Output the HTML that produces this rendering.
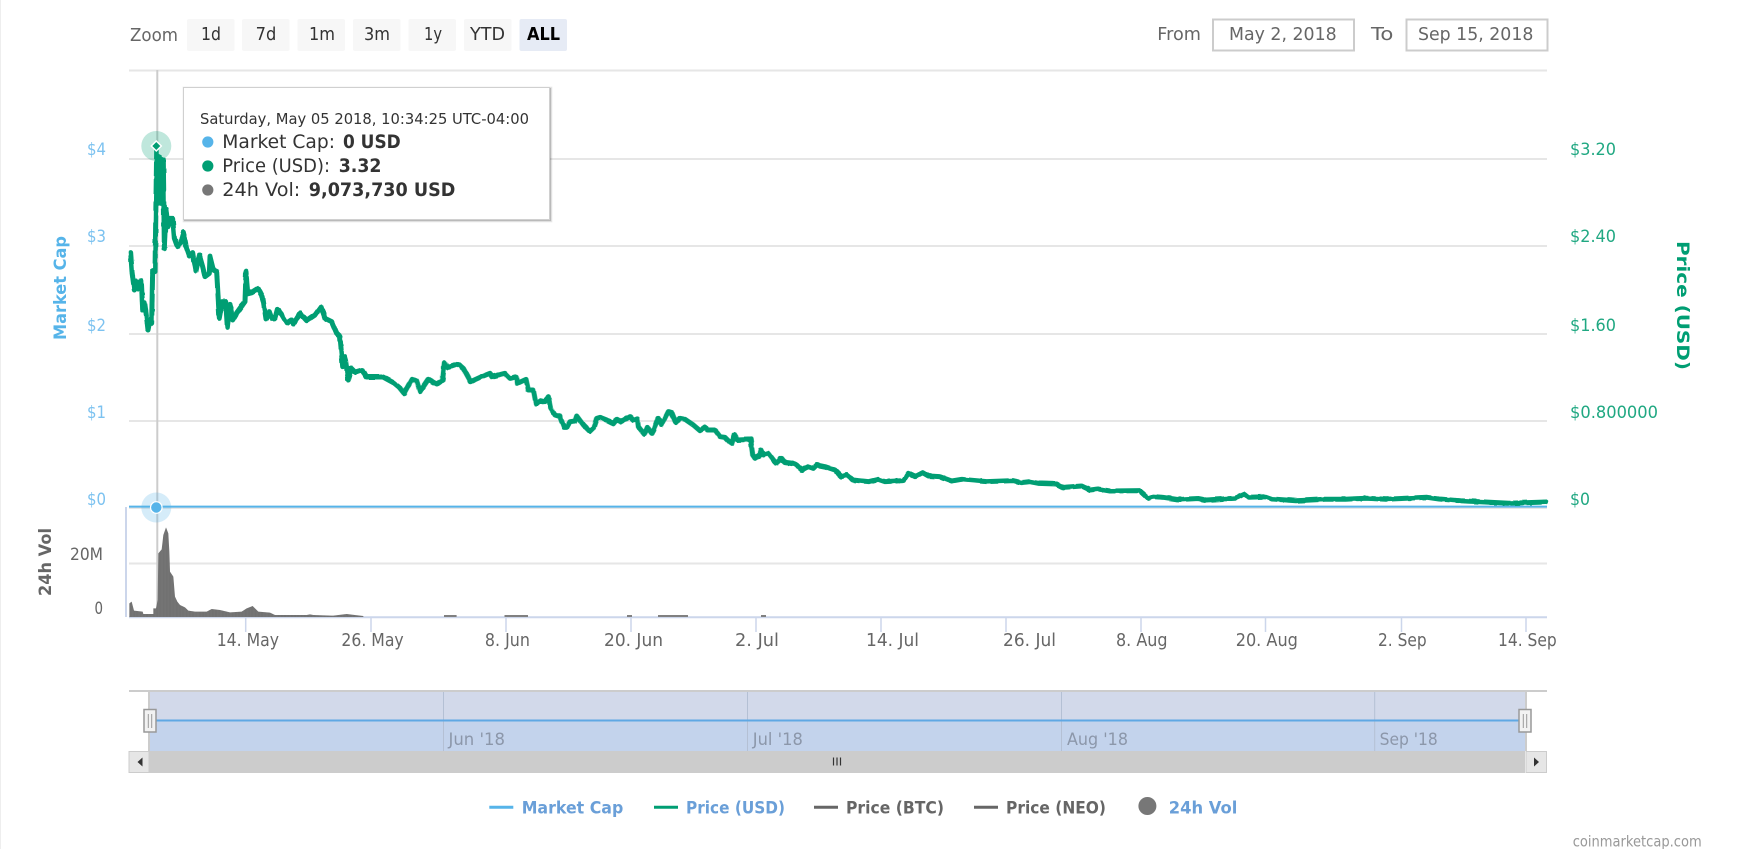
<!DOCTYPE html>
<html><head><meta charset="utf-8"><title>Chart</title>
<style>
html,body{margin:0;padding:0;background:#fff;width:1741px;height:849px;overflow:hidden}
svg{display:block;position:absolute;left:0;top:0}
text{font-family:"DejaVu Sans","Liberation Sans",sans-serif;white-space:pre}
.t{font-size:18px;fill:#666}
.b{font-size:18px;fill:#333}
.bl{font-size:16.5px;fill:#7cc2f0}
.gr{font-size:16.5px;fill:#20a882}
.x{font-size:18px;fill:#666}
.n{font-size:16.5px;fill:#8c97aa}
.l{font-size:17px;font-weight:bold}
.tt{font-size:19px;fill:#333}
.ttb{font-size:19px;fill:#333;font-weight:bold}
</style></head><body>
<svg width="1741" height="849" viewBox="0 0 1741 849" xmlns="http://www.w3.org/2000/svg">
<defs>
<pattern id="v" width="2.3" height="10" patternUnits="userSpaceOnUse"><rect width="2.3" height="10" fill="#808080"/><rect width="1.7" height="10" fill="#6e6e6e"/></pattern>
<filter id="rough" filterUnits="userSpaceOnUse" x="100" y="120" width="1470" height="410" color-interpolation-filters="sRGB">
<feTurbulence type="fractalNoise" baseFrequency=".14" numOctaves="1" seed="4" result="n"/>
<feDisplacementMap in="SourceGraphic" in2="n" scale="2.2" xChannelSelector="R" yChannelSelector="G"/>
</filter>
</defs>
<rect width="1741" height="849" fill="#fff"/>
<rect x="0" y="0" width="1" height="849" fill="#eee"/>

<!-- range selector -->
<text class="t" x="130" y="41" textLength="48" lengthAdjust="spacingAndGlyphs">Zoom</text>
<g fill="#f7f7f7">
<rect x="187" y="19" width="47.5" height="32" rx="2"/><rect x="242" y="19" width="47.5" height="32" rx="2"/><rect x="297.5" y="19" width="47.5" height="32" rx="2"/><rect x="353" y="19" width="47.5" height="32" rx="2"/><rect x="408.5" y="19" width="47.5" height="32" rx="2"/><rect x="464" y="19" width="47.5" height="32" rx="2"/>
<rect x="519.5" y="19" width="47.5" height="32" rx="2" fill="#e6ebf5"/>
</g>
<text class="b" x="201" y="40" textLength="20" lengthAdjust="spacingAndGlyphs">1d</text>
<text class="b" x="255.6" y="40" textLength="20.7" lengthAdjust="spacingAndGlyphs">7d</text>
<text class="b" x="309" y="40" textLength="26" lengthAdjust="spacingAndGlyphs">1m</text>
<text class="b" x="364" y="40" textLength="26" lengthAdjust="spacingAndGlyphs">3m</text>
<text class="b" x="424" y="40" textLength="18" lengthAdjust="spacingAndGlyphs">1y</text>
<text class="b" x="470" y="40" textLength="35" lengthAdjust="spacingAndGlyphs">YTD</text>
<text x="527" y="40" font-size="18" font-weight="bold" fill="#000" textLength="33" lengthAdjust="spacingAndGlyphs">ALL</text>

<text class="t" x="1157.3" y="40" textLength="43.7" lengthAdjust="spacingAndGlyphs">From</text>
<rect x="1213" y="19.5" width="141" height="31" fill="#fff" stroke="#ccc" stroke-width="2"/>
<text class="t" x="1229" y="40" textLength="107.7" lengthAdjust="spacingAndGlyphs">May 2, 2018</text>
<text class="t" x="1371" y="40" textLength="22.3" lengthAdjust="spacingAndGlyphs">To</text>
<rect x="1406.5" y="19.5" width="141" height="31" fill="#fff" stroke="#ccc" stroke-width="2"/>
<text class="t" x="1418" y="40" textLength="115.4" lengthAdjust="spacingAndGlyphs">Sep 15, 2018</text>

<!-- grid -->
<g stroke="#e6e6e6" stroke-width="2">
<line x1="129" x2="1547" y1="70.5" y2="70.5"/><line x1="129" x2="1547" y1="159" y2="159"/><line x1="129" x2="1547" y1="246" y2="246"/><line x1="129" x2="1547" y1="334" y2="334"/><line x1="129" x2="1547" y1="421" y2="421"/><line x1="129" x2="1547" y1="508" y2="508"/><line x1="129" x2="1547" y1="563.5" y2="563.5"/>
</g>
<!-- axes -->
<line x1="126" x2="126" y1="507" y2="617" stroke="#ccd6eb" stroke-width="2"/>
<line x1="129" x2="1547" y1="617.3" y2="617.3" stroke="#ccd6eb" stroke-width="2"/>
<g stroke="#ccd6eb" stroke-width="1.5">
<line x1="245.7" x2="245.7" y1="617" y2="632"/><line x1="371" x2="371" y1="617" y2="632"/><line x1="506" x2="506" y1="617" y2="632"/><line x1="631" x2="631" y1="617" y2="632"/><line x1="756" x2="756" y1="617" y2="632"/><line x1="881" x2="881" y1="617" y2="632"/><line x1="1006" x2="1006" y1="617" y2="632"/><line x1="1141" x2="1141" y1="617" y2="632"/><line x1="1265.5" x2="1265.5" y1="617" y2="632"/><line x1="1401.5" x2="1401.5" y1="617" y2="632"/><line x1="1526" x2="1526" y1="617" y2="632"/>
</g>

<!-- y labels -->
<text class="bl" x="87" y="155" textLength="19" lengthAdjust="spacingAndGlyphs">$4</text>
<text class="bl" x="87" y="242" textLength="19" lengthAdjust="spacingAndGlyphs">$3</text>
<text class="bl" x="87" y="331" textLength="19" lengthAdjust="spacingAndGlyphs">$2</text>
<text class="bl" x="87" y="418" textLength="19" lengthAdjust="spacingAndGlyphs">$1</text>
<text class="bl" x="87" y="505" textLength="19" lengthAdjust="spacingAndGlyphs">$0</text>
<text class="gr" x="1570" y="155" textLength="46" lengthAdjust="spacingAndGlyphs">$3.20</text>
<text class="gr" x="1570" y="242" textLength="46" lengthAdjust="spacingAndGlyphs">$2.40</text>
<text class="gr" x="1570" y="331" textLength="46" lengthAdjust="spacingAndGlyphs">$1.60</text>
<text class="gr" x="1570" y="418" textLength="88" lengthAdjust="spacingAndGlyphs">$0.800000</text>
<text class="gr" x="1570" y="505" textLength="20" lengthAdjust="spacingAndGlyphs">$0</text>
<text x="70" y="560" font-size="17" fill="#666" textLength="33" lengthAdjust="spacingAndGlyphs">20M</text>
<text x="94.5" y="614" font-size="17" fill="#666" textLength="8.5" lengthAdjust="spacingAndGlyphs">0</text>

<text transform="translate(66,340) rotate(-90)" font-size="17" font-weight="bold" fill="#56B4E9" textLength="104" lengthAdjust="spacingAndGlyphs">Market Cap</text>
<text transform="translate(1677,241) rotate(90)" font-size="17" font-weight="bold" fill="#009E73" textLength="129" lengthAdjust="spacingAndGlyphs">Price (USD)</text>
<text transform="translate(51,596) rotate(-90)" font-size="17" font-weight="bold" fill="#666" textLength="68" lengthAdjust="spacingAndGlyphs">24h Vol</text>

<!-- x labels -->
<text class="x" x="216.7" y="646" textLength="62.3" lengthAdjust="spacingAndGlyphs">14. May</text>
<text class="x" x="341.4" y="646" textLength="62.3" lengthAdjust="spacingAndGlyphs">26. May</text>
<text class="x" x="484.9" y="646" textLength="45" lengthAdjust="spacingAndGlyphs">8. Jun</text>
<text class="x" x="604" y="646" textLength="59" lengthAdjust="spacingAndGlyphs">20. Jun</text>
<text class="x" x="735" y="646" textLength="44" lengthAdjust="spacingAndGlyphs">2. Jul</text>
<text class="x" x="866" y="646" textLength="53" lengthAdjust="spacingAndGlyphs">14. Jul</text>
<text class="x" x="1003" y="646" textLength="53" lengthAdjust="spacingAndGlyphs">26. Jul</text>
<text class="x" x="1116" y="646" textLength="51.5" lengthAdjust="spacingAndGlyphs">8. Aug</text>
<text class="x" x="1235.7" y="646" textLength="62.2" lengthAdjust="spacingAndGlyphs">20. Aug</text>
<text class="x" x="1378" y="646" textLength="48.6" lengthAdjust="spacingAndGlyphs">2. Sep</text>
<text class="x" x="1498" y="646" textLength="58.7" lengthAdjust="spacingAndGlyphs">14. Sep</text>

<!-- crosshair -->
<line x1="157.3" x2="157.3" y1="70" y2="617" stroke="#cccccc" stroke-width="2"/>

<!-- volume -->
<polygon transform="translate(120,500) scale(.33333)" fill="url(#v)" points="28,350 28,310 35,305 42,332 68,335 70,342 100,342 100,325 108,325 113,300 115,160 125,148 130,105 138,82 145,100 148,155 150,215 160,230 165,290 172,305 180,315 195,322 205,332 225,335 260,335 275,327 300,330 330,337 365,335 380,325 398,318 415,335 450,338 465,345 560,345 570,343 580,345 635,347 640,347 680,342 695,344 730,348 730,351 28,351"/>
<g fill="#808080">
<rect x="444" y="615" width="12.6" height="2"/><rect x="504.5" y="615" width="23.5" height="2"/><rect x="627" y="615" width="5" height="2"/><rect x="658" y="615" width="30" height="2"/><rect x="761" y="615" width="5" height="2"/>
</g>

<!-- market cap line -->
<line x1="129" x2="1547" y1="506.6" y2="506.6" stroke="#56B4E9" stroke-width="2"/>

<!-- price line -->
<g fill="none" stroke="#009E73" stroke-linejoin="round" stroke-linecap="round" filter="url(#rough)">
<polyline transform="translate(120,120) scale(.33333)" stroke-width="15" points="32,398 36,455 43,510 48,483 55,507 60,483 64,482 68,570 74,548 78,578 84,630 90,600 95,610 98,450 105,455 110,90 114,250 118,110 122,250 125,118 128,250 130,120 133,385 138,268 144,320 150,295 158,295 163,355 172,380 182,368 190,335 200,385 208,408 218,398 228,453 238,405 248,440 255,470 268,460 270,410 280,450 290,455 298,595 307,545 317,545 322,622 330,553 338,600 350,580 375,545 378,455 383,520 395,517 415,505 428,530 438,597 448,575 455,595 465,595 472,568 485,585 500,610 515,600 520,612 540,580 560,602 585,585 603,560 615,595 635,605 650,640 660,650 668,740 675,710 685,780"/>
<polyline stroke-width="5" points="348,380 351,368 355,372 362,370 366,377 383,377 394,383 400,388"/>
<polyline transform="translate(400,340) scale(.33333)" stroke-width="15" points="0,145 12,160 35,118 50,122 60,155 85,118 110,132 128,120 133,68 145,82 175,72 190,85 212,125 240,112 270,100 275,110 315,100 330,115 350,110 352,130 378,118 385,150 400,150 408,192 420,182 435,185 445,170 452,205 465,225 480,230 492,262 500,262 510,245 525,243 530,228 550,255 570,275 580,265 590,235 600,232 620,240 640,250 650,238 665,245 690,230 700,240 712,235 715,260 733,283 742,262 755,280 775,235 785,255 805,215 815,218 827,248 840,235 855,238 880,255 900,272 917,262 922,270 945,270 960,290 975,292 995,312 1003,285 1012,300 1052,298 1058,345 1065,355 1080,345 1083,330 1090,345 1105,340 1128,370 1145,355 1155,368 1185,372 1200,385"/>
<polyline transform="translate(780,420) scale(.33333)" stroke-width="15" points="0,115 10,125 35,128 50,135 65,150 85,140 100,145 110,135 135,140 165,150 185,170 200,165 218,180 265,185 295,178 315,185 370,182 385,160 405,170 428,158 445,168 480,170 515,183 545,178 620,185 700,182 725,188 750,185 775,190 830,192 850,202 905,198 930,210 955,207 990,213 1080,212 1105,235 1120,230 1150,232 1190,238 1200,238"/>
<polyline stroke-width="5" points="1180,499.5 1198,498.5 1206,500 1235,498.3 1245,494 1249,497.3 1265.6,496.7 1272,499 1296,500.7 1325,499.3 1345,499.3 1366,498.3 1386,499.3 1427,497.3 1439,499 1460,500.7 1480,501.7 1509,503.3 1546,502"/>
</g>

<!-- markers -->
<circle cx="156.3" cy="146" r="15" fill="#009E73" opacity=".25"/>
<polygon points="156.3,141 161.3,146 156.3,151 151.3,146" fill="#009E73" stroke="#fff" stroke-width="1.5"/>
<circle cx="156.3" cy="507.5" r="15" fill="#56B4E9" opacity=".25"/>
<circle cx="156.3" cy="507.5" r="5.8" fill="#56B4E9" stroke="#fff" stroke-width="1.2"/>

<!-- tooltip -->
<g fill="none" stroke="#000">
<rect x="184.5" y="88.5" width="366" height="132" stroke-opacity=".05" stroke-width="4"/>
<rect x="184.5" y="88.5" width="366" height="132" stroke-opacity=".1" stroke-width="2.5"/>
<rect x="184.5" y="88.5" width="366" height="132" stroke-opacity=".15" stroke-width="1"/>
</g>
<rect x="183.5" y="87.5" width="366" height="132" fill="#fff" stroke="#d0d0d0"/>
<text x="200" y="124" font-size="15" fill="#333" textLength="329" lengthAdjust="spacingAndGlyphs">Saturday, May 05 2018, 10:34:25 UTC-04:00</text>
<circle cx="207.8" cy="142" r="5.6" fill="#56B4E9"/>
<text class="tt" x="222.3" y="148" textLength="112.7" lengthAdjust="spacingAndGlyphs">Market Cap:</text>
<text class="ttb" x="343" y="148" textLength="57.7" lengthAdjust="spacingAndGlyphs">0 USD</text>
<circle cx="207.8" cy="166" r="5.6" fill="#009E73"/>
<text class="tt" x="222.3" y="172" textLength="107.7" lengthAdjust="spacingAndGlyphs">Price (USD):</text>
<text class="ttb" x="338.7" y="172" textLength="42.8" lengthAdjust="spacingAndGlyphs">3.32</text>
<circle cx="207.8" cy="190" r="5.6" fill="#777"/>
<text class="tt" x="222.3" y="196" textLength="78" lengthAdjust="spacingAndGlyphs">24h Vol:</text>
<text class="ttb" x="308.8" y="196" textLength="146.6" lengthAdjust="spacingAndGlyphs">9,073,730 USD</text>

<!-- navigator -->
<line x1="129" x2="1547" y1="691" y2="691" stroke="#ccc" stroke-width="2"/>
<rect x="150" y="692" width="1375" height="28.5" fill="#d2d9ea"/>
<rect x="150" y="720.5" width="1375" height="30.5" fill="#c3d3ec"/>
<g stroke="#b4c0d4" stroke-width="1">
<line x1="443.5" x2="443.5" y1="692" y2="751"/><line x1="747.5" x2="747.5" y1="692" y2="751"/><line x1="1061.5" x2="1061.5" y1="692" y2="751"/><line x1="1374.7" x2="1374.7" y1="692" y2="751"/>
</g>
<line x1="149" x2="149" y1="692" y2="751" stroke="#ccc" stroke-width="2"/>
<line x1="1526" x2="1526" y1="692" y2="751" stroke="#ccc" stroke-width="2"/>
<line x1="150" x2="1525" y1="720.5" y2="720.5" stroke="#5fa8e4" stroke-width="2"/>
<text class="n" x="448.5" y="745" textLength="56.5" lengthAdjust="spacingAndGlyphs">Jun '18</text>
<text class="n" x="752.8" y="745" textLength="50" lengthAdjust="spacingAndGlyphs">Jul '18</text>
<text class="n" x="1067" y="745" textLength="61" lengthAdjust="spacingAndGlyphs">Aug '18</text>
<text class="n" x="1379.6" y="745" textLength="58.2" lengthAdjust="spacingAndGlyphs">Sep '18</text>

<rect x="144" y="709.5" width="12" height="22.5" fill="#f2f2f2" stroke="#999" stroke-width="1.5"/>
<line x1="148.3" x2="148.3" y1="714" y2="728" stroke="#999"/><line x1="151.7" x2="151.7" y1="714" y2="728" stroke="#999"/>
<rect x="1519" y="709.5" width="12" height="22.5" fill="#f2f2f2" stroke="#999" stroke-width="1.5"/>
<line x1="1523.3" x2="1523.3" y1="714" y2="728" stroke="#999"/><line x1="1526.7" x2="1526.7" y1="714" y2="728" stroke="#999"/>

<!-- scrollbar -->
<rect x="149" y="751" width="1376" height="22" fill="#cccccc"/>
<rect x="129" y="751.5" width="20" height="21" fill="#e6e6e6" stroke="#ccc"/>
<polygon points="142.5,757.5 142.5,766.5 137.5,762" fill="#333"/>
<rect x="1526" y="751.5" width="20.5" height="21" fill="#e6e6e6" stroke="#ccc"/>
<polygon points="1534,757.5 1534,766.5 1539,762" fill="#333"/>
<g stroke="#333" stroke-width="1.2"><line x1="833.5" x2="833.5" y1="757.5" y2="765.5"/><line x1="837" x2="837" y1="757.5" y2="765.5"/><line x1="840.5" x2="840.5" y1="757.5" y2="765.5"/></g>

<!-- legend -->
<line x1="489.3" x2="513.3" y1="807.3" y2="807.3" stroke="#56B4E9" stroke-width="3"/>
<text class="l" fill="#6a9fd8" x="521.7" y="813.3" textLength="101.6" lengthAdjust="spacingAndGlyphs">Market Cap</text>
<line x1="654" x2="678" y1="807.3" y2="807.3" stroke="#009E73" stroke-width="3"/>
<text class="l" fill="#6a9fd8" x="686" y="813.3" textLength="99" lengthAdjust="spacingAndGlyphs">Price (USD)</text>
<line x1="814" x2="838" y1="807.3" y2="807.3" stroke="#666" stroke-width="3"/>
<text class="l" fill="#666" x="846" y="813.3" textLength="98" lengthAdjust="spacingAndGlyphs">Price (BTC)</text>
<line x1="974" x2="998" y1="807.3" y2="807.3" stroke="#666" stroke-width="3"/>
<text class="l" fill="#666" x="1006" y="813.3" textLength="100" lengthAdjust="spacingAndGlyphs">Price (NEO)</text>
<circle cx="1147.4" cy="806" r="9" fill="#777"/>
<text class="l" fill="#6a9fd8" x="1168.7" y="813.3" textLength="68.7" lengthAdjust="spacingAndGlyphs">24h Vol</text>

<text x="1572.7" y="846.5" font-size="15" fill="#999" textLength="129" lengthAdjust="spacingAndGlyphs">coinmarketcap.com</text>
</svg>
</body></html>
